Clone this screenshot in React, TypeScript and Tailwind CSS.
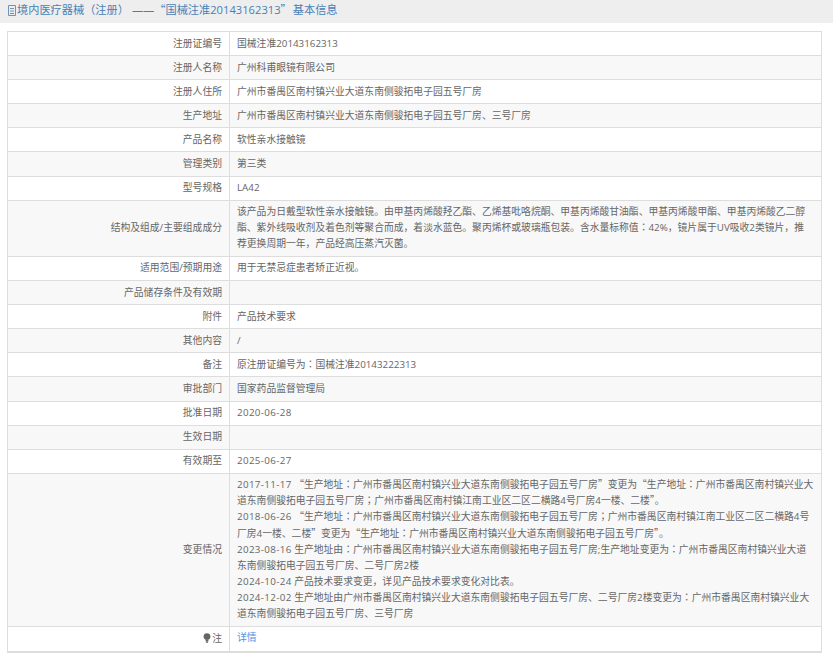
const rows: { label: string; value: string }[] = [
  { label: '注册证编号', value: '国械注准20143162313' },
  { label: '注册人名称', value: '广州科甫眼镜有限公司' },
  { label: '注册人住所', value: '广州市番禺区南村镇兴业大道东南侧骏拓电子园五号厂房' },
  { label: '生产地址', value: '广州市番禺区南村镇兴业大道东南侧骏拓电子园五号厂房、三号厂房' },
  { label: '产品名称', value: '软性亲水接触镜' },
  { label: '管理类别', value: '第三类' },
  { label: '型号规格', value: 'LA42' },
  {
    label: '结构及组成/主要组成成分',
    value:
      '该产品为日戴型软性亲水接触镜。由甲基丙烯酸羟乙酯、乙烯基吡咯烷酮、甲基丙烯酸甘油酯、甲基丙烯酸甲酯、甲基丙烯酸乙二醇酯、紫外线吸收剂及着色剂等聚合而成，着淡水蓝色。聚丙烯杯或玻璃瓶包装。含水量标称值：42%，镜片属于UV吸收2类镜片，推荐更换周期一年，产品经高压蒸汽灭菌。',
  },
  { label: '适用范围/预期用途', value: '用于无禁忌症患者矫正近视。' },
  { label: '产品储存条件及有效期', value: '' },
  { label: '附件', value: '产品技术要求' },
  { label: '其他内容', value: '/' },
  { label: '备注', value: '原注册证编号为：国械注准20143222313' },
  { label: '审批部门', value: '国家药品监督管理局' },
  { label: '批准日期', value: '2020-06-28' },
  { label: '生效日期', value: '' },
  { label: '有效期至', value: '2025-06-27' },
];

const changes = [
  '2017-11-17 “生产地址：广州市番禺区南村镇兴业大道东南侧骏拓电子园五号厂房”变更为“生产地址：广州市番禺区南村镇兴业大',
  '道东南侧骏拓电子园五号厂房；广州市番禺区南村镇江南工业区二区二横路4号厂房4一楼、二楼”。',
  '2018-06-26 “生产地址：广州市番禺区南村镇兴业大道东南侧骏拓电子园五号厂房；广州市番禺区南村镇江南工业区二区二横路4号',
  '厂房4一楼、二楼”变更为“生产地址：广州市番禺区南村镇兴业大道东南侧骏拓电子园五号厂房”。',
  '2023-08-16 生产地址由：广州市番禺区南村镇兴业大道东南侧骏拓电子园五号厂房;生产地址变更为：广州市番禺区南村镇兴业大道',
  '东南侧骏拓电子园五号厂房、二号厂房2楼',
  '2024-10-24 产品技术要求变更，详见产品技术要求变化对比表。',
  '2024-12-02 生产地址由广州市番禺区南村镇兴业大道东南侧骏拓电子园五号厂房、二号厂房2楼变更为：广州市番禺区南村镇兴业大',
  '道东南侧骏拓电子园五号厂房、三号厂房',
];

// quotes, centred punctuation and dates each need their own setting
function Punct({ text }: { text: string }) {
  return (
    <>
      {text.split(/([“”，：；]|\d{4}-\d{2}-\d{2})/).map((part, i) => {
        if (i % 2 === 0) return part;
        if (part.length > 1) {
          return (
            <span key={i} className="tracking-[0.35px]">
              {part}
            </span>
          );
        }
        return (
          <span
            key={i}
            className={
              part === '“' || part === '”'
                ? "font-['Noto_Sans_CJK_SC'] leading-none"
                : "font-['Noto_Sans_CJK_KR'] leading-none"
            }
          >
            {part}
          </span>
        );
      })}
    </>
  );
}

const labelCell = 'w-[222px] border border-[#ddd] py-[3.5px] pl-2 pr-[7px] text-right align-middle';
const valueCell = 'border border-[#ddd] py-[3.5px] pl-[7px] pr-2 align-top';

export default function App() {
  return (
    <div className="min-h-[657px] bg-white font-['Open_Sans','Noto_Sans_CJK_SC',sans-serif] text-[9.8px] leading-[16.1px] text-[#666]">
      <div className="flex h-[23px] items-center whitespace-nowrap bg-[#eee] pb-[3px] pl-2 text-[11.2px] text-[#4a7fb5]">
        <svg width="8" height="11" viewBox="0 0 8 11" fill="none" stroke="#6f93b5" strokeWidth="1" className="mr-[1px]">
          <path d="M.5 .5h7v10h-7z" />
          <path d="M2 3.5h4M2 6h4M2 8.5h4" />
        </svg>
        <span>境内医疗器械（注册）</span>
        <span className="ml-[3px]">——</span>
        <span>
          <Punct text="“国械注准20143162313”" />
        </span>
        <span className="ml-[1px]">基本信息</span>
      </div>
      <div className="px-[7px] pt-2">
        <table className="w-[815px] table-fixed border-collapse border-b-2 border-[#ddd]">
          <tbody>
            {rows.map((row, i) => (
              <tr key={row.label} className={i % 2 === 1 ? 'bg-[#f8f8f8]' : 'bg-white'}>
                <td className={labelCell}>{row.label}</td>
                <td className={valueCell}>
                  <Punct text={row.value} />
                </td>
              </tr>
            ))}
            <tr className="bg-[#f8f8f8]">
              <td className={labelCell}>变更情况</td>
              <td className={valueCell}>
                {changes.map((line) => (
                  <div key={line} className="whitespace-nowrap">
                    <Punct text={line} />
                  </div>
                ))}
              </td>
            </tr>
            <tr className="h-[26px] bg-white">
              <td className={labelCell}>
                <svg width="8" height="10" viewBox="0 0 8 10" className="mr-[1px] inline-block align-[-1px]" fill="#666">
                  <circle cx="4" cy="3.6" r="3.4" />
                  <path d="M2.6 7h2.8v1.4H2.6zM3 8.8h2v1H3z" />
                </svg>
                注
              </td>
              <td className={valueCell + ' align-middle'}>
                <a href="#" className="text-[#4f94e8]">详情</a>
              </td>
            </tr>
          </tbody>
        </table>
      </div>
    </div>
  );
}
